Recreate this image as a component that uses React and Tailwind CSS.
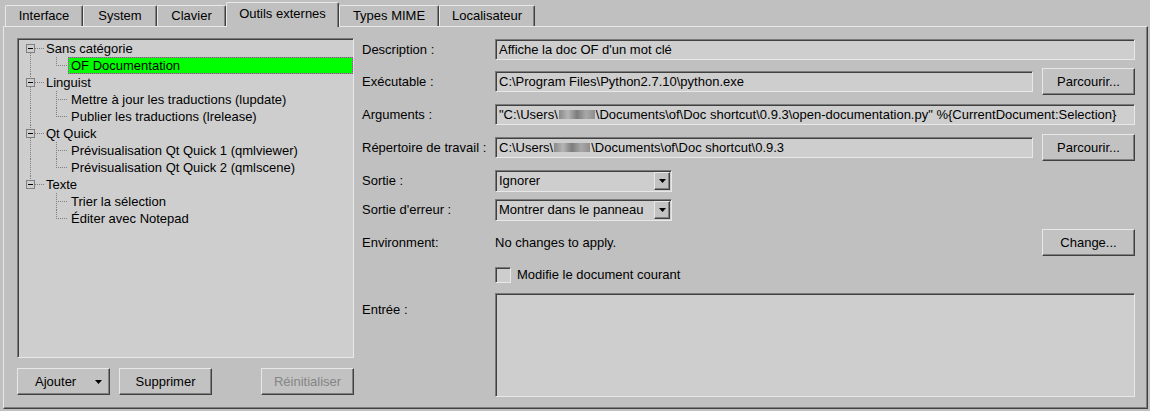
import React from "react";

const sunken =
  "border border-t-[#7a7a7a] border-l-[#7a7a7a] border-r-[#e8e8e8] border-b-[#e8e8e8] shadow-[inset_1px_1px_0_#404040] bg-[#cecece]";
const raised =
  "border border-t-[#e8e8e8] border-l-[#e8e8e8] border-r-[#404040] border-b-[#404040] shadow-[inset_-1px_-1px_0_#808080] bg-[#c2c2c2]";

const tree = [
  { name: "Sans catégorie", children: ["OF Documentation"] },
  {
    name: "Linguist",
    children: [
      "Mettre à jour les traductions (lupdate)",
      "Publier les traductions (lrelease)",
    ],
  },
  {
    name: "Qt Quick",
    children: [
      "Prévisualisation Qt Quick 1 (qmlviewer)",
      "Prévisualisation Qt Quick 2 (qmlscene)",
    ],
  },
  { name: "Texte", children: ["Trier la sélection", "Éditer avec Notepad"] },
];

function RootRow({ name, first, last }) {
  return (
    <div className="flex h-[17px] items-center">
      <svg width="27" height="17" className="shrink-0">
        {!first && (
          <line x1="11.5" y1="0" x2="11.5" y2="4" stroke="#808080" strokeDasharray="1 1" />
        )}
        {!last && (
          <line x1="11.5" y1="13" x2="11.5" y2="17" stroke="#808080" strokeDasharray="1 1" />
        )}
        <rect x="7.5" y="4.5" width="8" height="8" fill="#cecece" stroke="#808080" />
        <line x1="9" y1="8.5" x2="14" y2="8.5" stroke="#000" />
        <line x1="16" y1="8.5" x2="26" y2="8.5" stroke="#808080" strokeDasharray="1 1" />
      </svg>
      <span className="whitespace-nowrap leading-[17px]">{name}</span>
    </div>
  );
}

function ChildRow({ name, parentLast, lastChild, selected }) {
  return (
    <div className="flex h-[17px] items-stretch">
      <svg width="49" height="17" className="shrink-0">
        {!parentLast && (
          <line x1="11.5" y1="0" x2="11.5" y2="17" stroke="#808080" strokeDasharray="1 1" />
        )}
        <line
          x1="37.5"
          y1="0"
          x2="37.5"
          y2={lastChild ? 9 : 17}
          stroke="#808080"
          strokeDasharray="1 1"
        />
        <line x1="39" y1="8.5" x2="49" y2="8.5" stroke="#808080" strokeDasharray="1 1" />
      </svg>
      {selected ? (
        <span className="flex-1 whitespace-nowrap bg-[#00ff00] border border-dotted border-[#ff00ff] pl-[2px] leading-[15px]">
          {name}
        </span>
      ) : (
        <span className="whitespace-nowrap pl-[3px] leading-[17px]">{name}</span>
      )}
    </div>
  );
}

function Tab({ label, w, selected }) {
  if (selected) {
    return (
      <div
        className={`relative z-10 -mb-[1px] h-[25px] ${w} flex items-center justify-center rounded-tl-[2px] rounded-tr-[2px] border-t border-l border-t-[#e8e8e8] border-l-[#e8e8e8] border-r border-r-[#404040] shadow-[inset_-1px_0_0_#808080] bg-[#c0c0c0] pb-[2px]`}
      >
        {label}
      </div>
    );
  }
  return (
    <div
      className={`h-[21px] ${w} flex items-center justify-center rounded-tl-[2px] rounded-tr-[2px] border-t border-l border-t-[#e8e8e8] border-l-[#e8e8e8] border-r border-r-[#404040] shadow-[inset_-1px_0_0_#808080] bg-[#c0c0c0]`}
    >
      {label}
    </div>
  );
}

function Button({ children, className = "", disabled }) {
  return (
    <div
      className={`${raised} flex h-[27px] w-[93px] shrink-0 items-center justify-center ${
        disabled ? "text-[#858585]" : ""
      } ${className}`}
    >
      {children}
    </div>
  );
}

function Combo({ value }) {
  return (
    <div className={`${sunken} flex h-[22px] w-[177px] items-center pl-[3px] pr-[1px]`}>
      <span className="flex-1 whitespace-nowrap">{value}</span>
      <div className={`${raised} flex h-[18px] w-[16px] items-center justify-center`}>
        <svg width="7" height="4">
          <polygon points="0,0 7,0 3.5,4" fill="#000" />
        </svg>
      </div>
    </div>
  );
}

function Label({ children, className = "" }) {
  return <div className={`w-[133px] shrink-0 whitespace-nowrap ${className}`}>{children}</div>;
}

function Field({ children, className = "" }) {
  return (
    <div className={`${sunken} flex h-[21px] min-w-0 flex-1 items-center overflow-hidden whitespace-nowrap pl-[3px] ${className}`}>
      {children}
    </div>
  );
}

const Blur = () => (
  <span className="mx-[1px] inline-block h-[9px] w-[36px] bg-[linear-gradient(90deg,#8a8a8a,#b5b5b5,#7c7c7c,#a8a8a8,#8e8e8e)] align-middle" />
);

export default function App() {
  return (
    <div className="h-[411px] w-[1150px] overflow-hidden bg-[#c0c0c0] font-['Liberation_Sans',Arial,sans-serif] text-[13px] text-black">
      {/* tab bar */}
      <div className="flex h-[26px] items-end pl-[5px]">
        <Tab label="Interface" w="w-[78px]" />
        <Tab label="System" w="w-[74px]" />
        <Tab label="Clavier" w="w-[69px]" />
        <Tab label="Outils externes" w="w-[113px]" selected />
        <Tab label="Types MIME" w="w-[100px]" />
        <Tab label="Localisateur" w="w-[96px]" />
      </div>

      {/* pane */}
      <div className="ml-[3px] flex h-[383px] w-[1145px] gap-[8px] border border-t-[#e8e8e8] border-l-[#e8e8e8] border-r-[#404040] border-b-[#404040] pl-[13px] pr-[12px] pt-[11px] shadow-[inset_-1px_-1px_0_#808080]">
        {/* left column */}
        <div className="flex w-[337px] shrink-0 flex-col">
          <div className={`${sunken} h-[320px] pt-[1px] pl-[1px]`}>
            {tree.map((r, ri) => (
              <div key={r.name}>
                <RootRow name={r.name} first={ri === 0} last={ri === tree.length - 1} />
                {r.children.map((c, ci) => (
                  <ChildRow
                    key={c}
                    name={c}
                    parentLast={ri === tree.length - 1}
                    lastChild={ci === r.children.length - 1}
                    selected={c === "OF Documentation"}
                  />
                ))}
              </div>
            ))}
          </div>
          <div className="mt-[10px] flex">
            <Button className="justify-start pl-[17px]">
              <span>Ajouter</span>
              <svg width="7" height="4" className="ml-[19px]">
                <polygon points="0,0 7,0 3.5,4" fill="#000" />
              </svg>
            </Button>
            <Button className="ml-[9px]">Supprimer</Button>
            <Button className="ml-[49px]" disabled>
              Réinitialiser
            </Button>
          </div>
        </div>

        {/* right column */}
        <div className="flex min-w-0 flex-1 flex-col pt-[1px]">
          <div className="flex h-[21px] items-center">
            <Label>Description :</Label>
            <Field>Affiche la doc OF d'un mot clé</Field>
          </div>
          <div className="mt-[8px] flex h-[27px] items-center">
            <Label>Exécutable :</Label>
            <Field>C:\Program Files\Python2.7.10\python.exe</Field>
            <Button className="ml-[9px]">Parcourir...</Button>
          </div>
          <div className="mt-[9px] flex h-[21px] items-center">
            <Label>Arguments :</Label>
            <Field>
              "C:\Users\
              <Blur />
              \Documents\of\Doc shortcut\0.9.3\open-documentation.py" %&#123;CurrentDocument:Selection&#125;
            </Field>
          </div>
          <div className="mt-[9px] flex h-[27px] items-center">
            <Label>Répertoire de travail :</Label>
            <Field>
              C:\Users\
              <Blur />
              \Documents\of\Doc shortcut\0.9.3
            </Field>
            <Button className="ml-[9px]">Parcourir...</Button>
          </div>
          <div className="mt-[9px] flex h-[22px] items-center">
            <Label>Sortie :</Label>
            <Combo value="Ignorer" />
          </div>
          <div className="mt-[7px] flex h-[22px] items-center">
            <Label>Sortie d'erreur :</Label>
            <Combo value="Montrer dans le panneau" />
          </div>
          <div className="mt-[8px] flex h-[27px] items-center">
            <Label>Environment:</Label>
            <div className="flex-1 whitespace-nowrap">No changes to apply.</div>
            <Button>Change...</Button>
          </div>
          <div className="mt-[10px] flex h-[17px] items-center">
            <div className="w-[133px] shrink-0" />
            <div className={`${sunken} h-[16px] w-[16px]`} />
            <span className="ml-[6px] whitespace-nowrap">Modifie le document courant</span>
          </div>
          <div className="mt-[10px] flex h-[104px] items-start">
            <Label className="pt-[7px]">Entrée :</Label>
            <div className={`${sunken} h-full flex-1`} />
          </div>
        </div>
      </div>
    </div>
  );
}
